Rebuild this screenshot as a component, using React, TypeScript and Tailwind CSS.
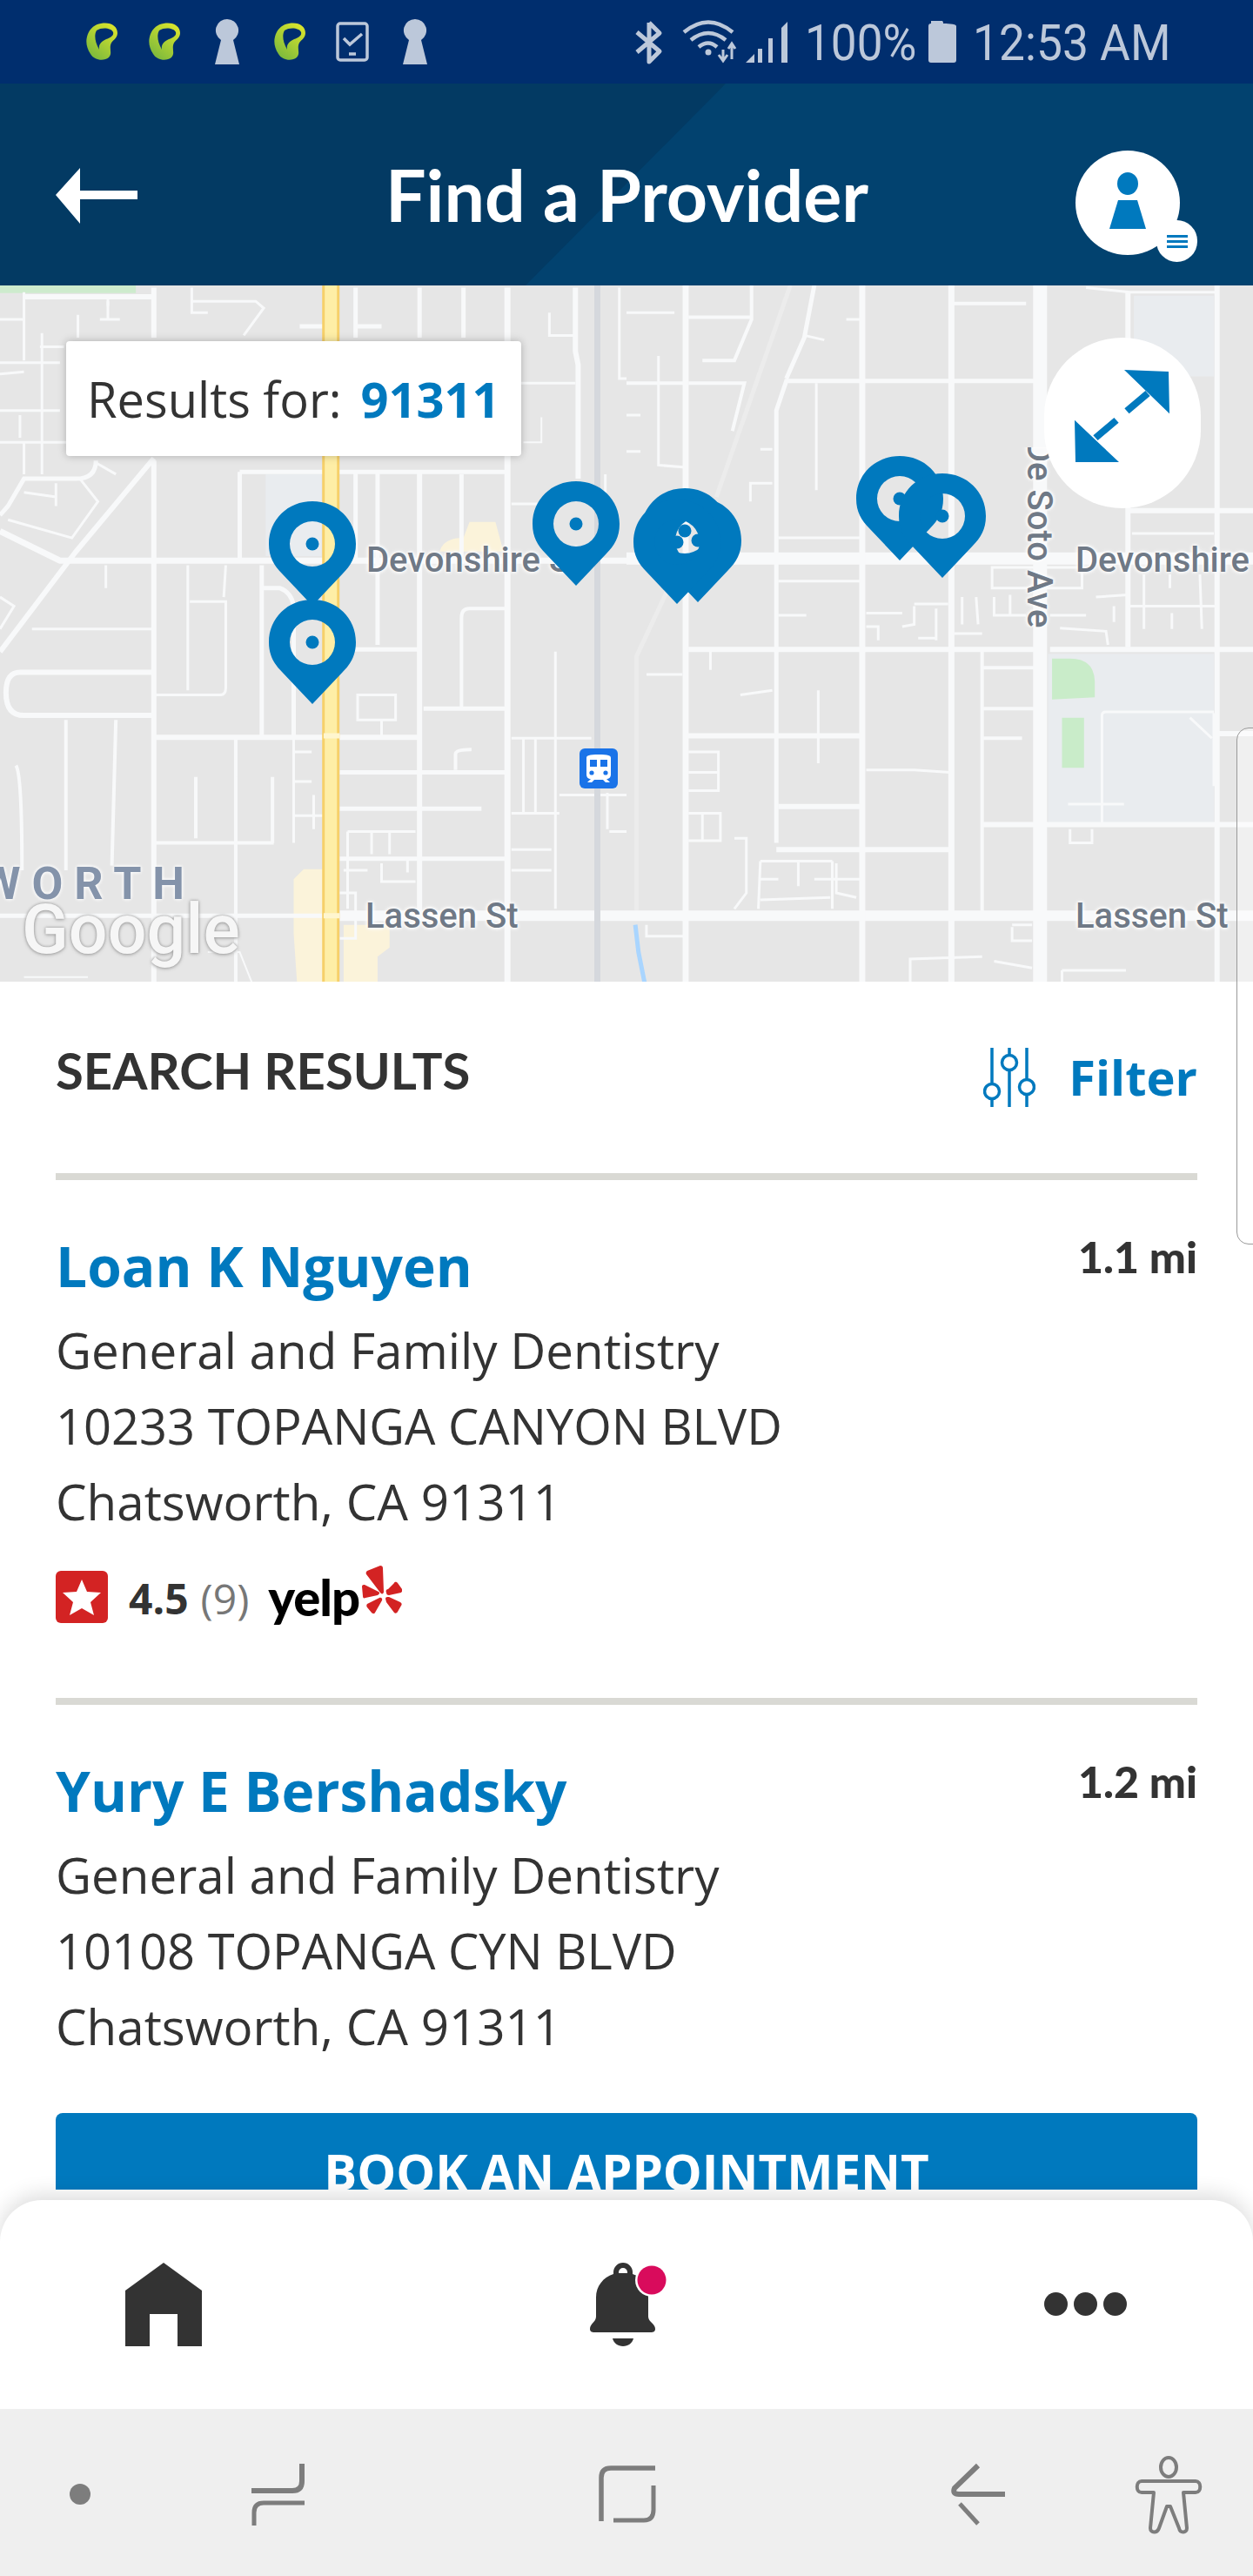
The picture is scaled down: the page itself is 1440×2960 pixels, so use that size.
import type { ReactNode } from "react";

const OPEN_SANS = "font-['Open_Sans',sans-serif]";
const LATO = "font-['Lato',sans-serif]";
const ROBOTO = "font-['Roboto',sans-serif]";
const MAP_LABEL =
  "absolute whitespace-nowrap font-['Roboto',sans-serif] text-[40px] leading-none font-medium text-[#6f7986] [text-shadow:0_0_4px_#fff,0_0_4px_#fff,0_0_6px_#fff]";

type Road = readonly [d: string, width: number];

// coordinates are read off a 2.178 x 1.912 blow-up of each half of the map
const LEFT_ROADS: readonly Road[] = [
  ["M0 555L150 620L1568 620", 7],
  ["M600 425H1270M600 425V615M890 425V620M945 425V805M1155 430V620", 5],
  ["M0 820L190 600L385 395", 6],
  ["M20 500L60 440H190Q240 440 240 400M60 440L20 500L0 520", 5],
  ["M60 30V180M0 185H150M0 90H60M0 360H190M60 360V430M105 120V430M195 80V130M250 90H300M270 50V90", 3],
  ["M60 40H385M385 20V130M385 400V1568", 6],
  ["M0 290H150M0 210L60 205M100 150H160M50 300V350", 3],
  ["M200 440L245 490L180 570L20 530M60 470L140 480M140 450V500M240 405L290 430", 3],
  ["M0 700L35 720L0 770M265 630V680M80 770H385", 3],
  ["M385 865H50Q15 865 15 910Q15 960 60 960H385", 6],
  ["M165 970V1300M290 970L280 1290M40 1070Q55 1090 55 1300", 4],
  ["M470 630V905M475 710H565V900Q565 915 550 915H390M565 630L560 700", 3],
  ["M655 630V1005M660 680H700Q730 690 735 720V1005", 5],
  ["M390 1008H1050", 6],
  ["M590 1010V1568M390 1240H685M490 1095V1230M682 1095V1240", 4],
  ["M1050 425V1400", 6],
  ["M855 815H1050M850 1085H1270M850 1165H1205M850 1275H1270M1060 945H1270", 5],
  ["M1270 20V1568", 7],
  ["M735 1040H780M735 1105H780M735 1180H810M735 1010V1240M785 1135V1210", 3],
  ["M870 1215H1040M870 1215V1385M930 1215V1265M975 1215V1265M860 1300H920M955 1285V1325H1040M1020 1275V1305M850 1350H890V1450H850", 3],
  ["M895 915H990V970H895ZM955 970V1005", 3],
  ["M1265 725H1175Q1155 725 1155 745V945M1140 1080V1045Q1140 1035 1180 1035", 4],
  ["M1355 305V360H1310", 2],
  ["M890 20V130M895 105H955M1050 20V130M1160 20V130M750 105H810", 5],
  ["M480 50H640L660 65L610 125M480 20V75H520M270 40V60", 3],
  ["M1440 20V160L1447 190V440", 6],
  ["M1375 75V125H1440M1270 230H1440M1550 20V220H1568M1515 430V490", 3],
  ["M1280 495H1400M1390 820V1385M1310 1010V1175M1340 1010V1175M1280 1010H1400M1280 1175H1400M1280 1255H1380M1280 1300H1380", 3],
  ["M1400 1135H1568M1520 1130V1210M1525 1215H1568M1400 1010H1480", 3],
  ["M0 1400H810", 5],
  ["M850 1400H1568", 12],
  ["M520 1480H600L640 1568M60 1535H220", 2],
];

const RIGHT_ROADS: readonly Road[] = [
  ["M0 615H1568", 14],
  ["M0 1400H1568", 12],
  ["M148 15V1568", 7],
  ["M375 1240V290L400 225H1035M470 15L445 130L400 220", 5],
  ["M0 230H148M155 85H313M313 15V90L270 180H190M155 230H295L265 335", 4],
  ["M80 170V410L148 415M0 75H120M0 300H35M0 380H35M335 375H365M310 490V450H365", 3],
  ["M590 15V1568M813 15V1568", 7],
  ["M1035 15V1568", 16],
  ["M1255 30V810M1478 15V1568", 6],
  ["M155 815H1025M150 1005H590M380 1160H590M375 1255H810M1060 815H1568M890 1200H1568M1260 510H1568M1480 1000H1568", 6],
  ["M475 230V465M445 125L495 135M380 570H590M380 665H590M380 740H450M550 90H585", 3],
  ["M890 820V1390M890 855H1030M890 945H1030M890 1010H990M815 55H1000", 4],
  ["M600 1080H660H720L810 1085", 3],
  ["M1190 1200V960Q1190 952 1200 952H1470M1105 1155H1245M1470 955V1115M1410 965L1465 1010", 3],
  ["M155 1040H230V1125H155M155 1085H230M155 1175H235V1235H155M190 1175V1235", 3],
  ["M335 1280H515M335 1280L330 1385M335 1320H380M430 1280V1335M335 1365L510 1360M515 1280V1385M270 1230H300V1350L270 1385M525 1285V1350L575 1360M470 1320H585", 3],
  ["M600 735H690M720 720V760L690 765M775 725V795M730 790H775M720 715H805M600 765H630V795", 3],
  ["M50 870H140M210 820V860M285 915L365 905M480 905V1065", 3],
  ["M915 635H1140V680H915ZM840 700V760M875 700L880 760M820 780H890M920 700V740H1000M960 695V740M1085 768L1200 775L1205 805M1175 700L1255 695M1060 740H1150M1220 720V755", 3],
  ["M1110 1210V1240H1165V1210M965 1420H1015M965 1425V1455H1015M710 1568V1495L890 1490M920 1500L1015 1515M1090 1520H1250M1090 1568V1520", 3],
  ["M1150 20L1260 30H1478M1265 560H1470M1295 650V770M1435 650L1440 770M1360 650V680M1365 735V770M1260 720H1478", 3],
  ["M50 1420V1445H148", 3],
];

function StreetMap() {
  return (
    <svg viewBox="0 0 1440 800" className="absolute inset-0 h-[800px] w-[1440px]">
      <rect width="1440" height="800" fill="#e6e6e6" />
      <g transform="translate(0 -8) scale(0.4592 0.523)">
        <path d="M0 15H340V32H0Z" fill="#cdebcd" />
        <path d="M665 430H805V610H665Z" fill="#e9ecef" />
        <path d="M1100 600Q1110 570 1160 570L1175 535H1240L1260 600Z" fill="#fbf3da" />
        <path d="M735 1320L760 1298H810V1568H745L735 1440ZM860 1420H975V1470L945 1490V1568H860Z" fill="#fbf3da" />
        {LEFT_ROADS.map(([d, width]) => (
          <path key={d} d={d} fill="none" stroke="#f8f9fa" strokeWidth={width} vectorEffect="non-scaling-stroke" />
        ))}
        <path d="M1495 15V1568" stroke="#d5d8dd" strokeWidth="7" vectorEffect="non-scaling-stroke" />
        <path d="M828 15V1568" stroke="#f6d06a" strokeWidth="20" vectorEffect="non-scaling-stroke" />
        <path d="M828 15V1568" stroke="#feeea6" strokeWidth="14" vectorEffect="non-scaling-stroke" />
        <path d="M810 1005H850M810 1400H850" stroke="#fff6cf" strokeWidth="6" vectorEffect="non-scaling-stroke" />
      </g>
      <g transform="translate(720 -8) scale(0.4592 0.523)">
        <path d="M1055 825H1470V1195H1055ZM1270 38H1470V215H1270Z" fill="#e9ecef" />
        <path d="M1065 835H1110Q1170 835 1172 885V920L1065 925ZM1090 965H1145V1075H1090Z" fill="#c9ecc9" />
        <path d="M410 15L225 480M100 690L25 830V1400" fill="none" stroke="#ececec" strokeWidth="5" vectorEffect="non-scaling-stroke" />
        {RIGHT_ROADS.map(([d, width]) => (
          <path key={d} d={d} fill="none" stroke="#f8f9fa" strokeWidth={width} vectorEffect="non-scaling-stroke" />
        ))}
        <path d="M22 1420L30 1480L50 1568" fill="none" stroke="#a9d5ff" strokeWidth="5" vectorEffect="non-scaling-stroke" />
      </g>
    </svg>
  );
}

function MapPin({ left, top }: { left: string; top: string }) {
  return (
    <svg viewBox="0 0 100 120" className={`absolute h-[120px] w-[100px] ${left} ${top}`}>
      <path
        fill="#0079be"
        fillRule="evenodd"
        d="M50 0C78 0 100 21 100 49C100 64 94 74 85 83L50 120L15 83C6 74 0 64 0 49C0 21 22 0 50 0ZM50 23A26 26 0 1 0 50 75A26 26 0 0 0 50 23Z"
      />
      <circle cx="50" cy="49" r="7.5" fill="#0079be" />
    </svg>
  );
}

function TransitBadge() {
  return (
    <svg viewBox="0 0 44 46" className="absolute left-[666px] top-[532px] h-[46px] w-[44px]">
      <rect width="44" height="46" rx="6" fill="#1a73e8" />
      <path fill="#fff" d="M8 11C8 8 11 7 22 7C33 7 36 8 36 11V30C36 33 34 35 31 35L35 39H30L27 36H17L14 39H9L13 35C10 35 8 33 8 30Z" />
      <path fill="#1a73e8" d="M12 13H20V21H12ZM24 13H32V21H24Z" />
      <circle cx="14" cy="28" r="2.6" fill="#1a73e8" />
      <circle cx="30" cy="28" r="2.6" fill="#1a73e8" />
    </svg>
  );
}

function LeafIcon() {
  return (
    <svg viewBox="0 0 36 44" className="h-[44px] w-[36px]">
      <defs>
        <linearGradient id="leaf-fill" x1="0.2" y1="0.9" x2="0.8" y2="0">
          <stop offset="0" stopColor="#7fbb3c" />
          <stop offset="1" stopColor="#dbe52c" />
        </linearGradient>
      </defs>
      <path
        fill="url(#leaf-fill)"
        fillRule="evenodd"
        d="M17 1C28 -1 36 4 36 12C36 19 29 20 28 26C27 31 30 36 26 40C20 45 9 43 5 36C0 28 -1 21 2 13C5 6 10 2 17 1ZM12 9C9 14 10 22 15 31C14 25 17 22 23 19C28 17 32 15 31 11C29 6 18 5 12 9Z"
      />
    </svg>
  );
}

function KeyholeIcon() {
  return (
    <svg viewBox="0 0 28 52" className="h-[52px] w-[28px]">
      <path fill="#bcc8da" d="M14 0A13 13 0 0 1 21 24L28 52H0L7 24A13 13 0 0 1 14 0Z" />
    </svg>
  );
}

function StatusIcons() {
  return (
    <div className="flex items-center">
      <div className="ml-[99px]"><LeafIcon /></div>
      <div className="ml-[36px]"><LeafIcon /></div>
      <div className="ml-[40px]"><KeyholeIcon /></div>
      <div className="ml-[40px]"><LeafIcon /></div>
      <svg viewBox="0 0 38 46" className="ml-[35px] h-[46px] w-[38px]" fill="none" stroke="#bcc8da">
        <rect x="2" y="2" width="34" height="42" rx="3" strokeWidth="3.5" />
        <path d="M9 19L16 26L30 14" strokeWidth="3.5" />
        <path d="M15 37H23" strokeWidth="3.5" />
      </svg>
      <div className="ml-[39px]"><KeyholeIcon /></div>
    </div>
  );
}

function StatusRight() {
  return (
    <div className="absolute left-0 top-0 flex h-24 w-full text-[#bcc8da]">
      <svg viewBox="0 0 620 96" className="absolute left-[720px] top-0 h-24 w-[620px]" fill="none" stroke="#bcc8da">
        {/* bluetooth */}
        <path d="M26 26V71L38 59L12 37M26 26L38 38L12 60" strokeWidth="5" strokeLinejoin="round" />
        {/* wifi */}
        <path d="M66 37Q94 14 122 37M74 46Q94 30 114 46M83 54Q94 45 104 54" strokeWidth="4.5" />
        <circle cx="94" cy="60" r="3.5" fill="#bcc8da" stroke="none" />
        <path d="M111 57V68M106 63L111 70L116 63M121 68V52M117 56L121 50L125 56" strokeWidth="3" />
        {/* signal */}
        <path d="M137 72L147 62V72ZM151 72V56H156V72ZM163 72V44H168V72ZM178 72V32L185 25V72Z" fill="#bcc8da" stroke="none" />
        {/* battery */}
        <path d="M347 30C347 28 348 27 350 27V24C350 24 351 24 352 24H362C363 24 364 24 364 27C366 27 379 27 379 30V69C379 71 378 72 376 72H350C348 72 347 71 347 69Z" fill="#bcc8da" stroke="none" />
      </svg>
      <span className={`absolute left-[925px] top-[20px] w-[121px] origin-left scale-x-[0.915] whitespace-nowrap text-[58px] leading-[58px] ${ROBOTO}`}>
        100%
      </span>
      <span className={`absolute left-[1118px] top-[20px] origin-left scale-x-[0.92] whitespace-nowrap text-[58px] leading-[58px] ${ROBOTO}`}>
        12:53 AM
      </span>
    </div>
  );
}

function AppHeader() {
  return (
    <header className="relative flex h-[232px] items-center justify-between bg-[#033a63] pl-[64px] pr-[84px]">
      <div className="absolute inset-0 bg-[#02426f] [clip-path:polygon(834px_0,100%_0,100%_100%,604px_100%)]" />
      <svg viewBox="0 0 94 64" className="relative mt-[25px] h-[64px] w-[94px]">
        <path fill="#fff" d="M28 0V26H94V36H28V64L0 31Z" />
      </svg>
      <h1 className={`absolute left-[443px] top-[80px] whitespace-nowrap text-[82.5px] leading-[96px] font-bold text-white ${LATO}`}>
        Find a Provider
      </h1>
      <div className="relative mt-[42px] h-[120px] w-[120px] rounded-full bg-white">
        <svg viewBox="0 0 120 120" className="h-[120px] w-[120px]">
          <ellipse cx="60" cy="38" rx="12" ry="13" fill="#0079be" />
          <path fill="#0079be" d="M49 57H71L81 90H39Z" />
        </svg>
        <div className="absolute left-[93px] top-[80px] flex h-[48px] w-[47px] flex-col items-center justify-center gap-[3px] rounded-full bg-white">
          <span className="h-[3px] w-[24px] bg-[#0079be]" />
          <span className="h-[3px] w-[24px] bg-[#0079be]" />
          <span className="h-[3px] w-[24px] bg-[#0079be]" />
        </div>
      </div>
    </header>
  );
}

function MapPanel() {
  return (
    <section className="relative h-[800px] overflow-hidden">
      <StreetMap />
      <span className={`${MAP_LABEL} left-[421px] top-[296px]`}>Devonshire St</span>
      <span className={`${MAP_LABEL} left-[1236px] top-[296px]`}>Devonshire</span>
      <span className={`${MAP_LABEL} left-[420px] top-[705px]`}>Lassen St</span>
      <span className={`${MAP_LABEL} left-[1236px] top-[705px]`}>Lassen St</span>
      <span className={`${MAP_LABEL} left-[1170px] top-[177px] origin-top-left translate-x-[44px] rotate-90 [clip-path:inset(0_0_0_9px)]`}>De Soto Ave</span>
      <span className={`absolute left-[-22px] top-[662px] text-[52px] leading-none font-bold tracking-[13px] text-[#8493aa] [text-shadow:0_0_4px_#fff,0_0_4px_#fff] ${ROBOTO}`}>
        WORTH
      </span>
      <span className={`absolute left-[25px] top-[701px] text-[79px] leading-none font-medium text-[#f6f6f6] [text-shadow:0_0_3px_#9a9a9a,0_1px_4px_#aaa] ${ROBOTO}`}>
        Google
      </span>
      <TransitBadge />
      <MapPin left="left-[309px]" top="top-[248px]" />
      <MapPin left="left-[309px]" top="top-[361px]" />
      <MapPin left="left-[612px]" top="top-[225px]" />
      <MapPin left="left-[737px]" top="top-[233px]" />
      <MapPin left="left-[752px]" top="top-[244px]" />
      <MapPin left="left-[728px]" top="top-[246px]" />
      <MapPin left="left-[984px]" top="top-[196px]" />
      <MapPin left="left-[1033px]" top="top-[216px]" />
      <div className="absolute left-[76px] top-[64px] flex h-[132px] w-[523px] items-center gap-[22px] rounded-[4px] bg-white pl-[24px] shadow-[0_0_10px_rgba(0,0,0,0.25)]">
        <span className={`text-[56px] leading-none text-[#333] ${OPEN_SANS}`}>Results for:</span>
        <span className={`text-[56px] leading-none font-bold text-[#0079be] ${OPEN_SANS}`}>91311</span>
      </div>
      <button type="button" className="absolute left-[1200px] top-[60px] flex h-[196px] w-[180px] items-center justify-center rounded-full bg-white">
        <svg viewBox="0 0 110 112" className="mb-[14px] h-[108px] w-[110px]" preserveAspectRatio="none" fill="#0079be">
          <path d="M57 0L108 2L109 52ZM0 60L1 110L51 110Z" />
          <path d="M84 28L60 49M24 81L48 60" stroke="#0079be" strokeWidth="8" />
        </svg>
      </button>
    </section>
  );
}

function FilterIcon() {
  return (
    <svg viewBox="0 0 60 68" className="mt-[8px] h-[68px] w-[60px]" fill="none" stroke="#0079be" strokeWidth="3.5">
      <path d="M10 0V40M10 60V68M30 0V7M30 27V68M50 0V35M50 55V68" />
      <circle cx="10" cy="50" r="8.5" />
      <circle cx="30" cy="17" r="8.5" />
      <circle cx="50" cy="45" r="8.5" />
    </svg>
  );
}

function YelpBurst() {
  return (
    <svg viewBox="0 0 46 62" className="-mt-[10px] ml-[3px] h-[62px] w-[46px]" fill="#d32323">
      <path d="M6 6L21 0C23 0 24 1 24 3L25 30C25 33 22 33 21 31L5 10C4 8 5 7 6 6Z" />
      <path d="M1 35L0 24C0 22 2 22 3 22L19 30C21 31 20 33 18 34L4 37C2 38 1 37 1 35Z" />
      <path d="M20 37C22 36 24 38 23 40L15 54C14 56 12 55 11 54L6 48C5 47 5 45 6 44Z" />
      <path d="M27 38C27 36 29 36 31 36L44 42C46 43 46 45 45 46L41 53C40 55 38 55 37 54L28 42Z" />
      <path d="M28 31C27 29 28 27 30 27L37 20C38 18 40 19 41 20L46 27C47 29 46 30 45 31L31 34C29 34 28 33 28 31Z" />
    </svg>
  );
}

function RatingRow() {
  return (
    <div className="mt-[36px] flex h-[60px] items-center">
      <svg viewBox="0 0 60 60" className="h-[60px] w-[60px]">
        <rect width="60" height="60" rx="6" fill="#d32323" />
        <path fill="#fff" d="M30 10L36 24L52 25L40 36L44 51L30 43L16 51L20 36L8 25L24 24Z" />
      </svg>
      <span className={`ml-[24px] mt-[4px] text-[48px] leading-none font-bold text-[#333] ${OPEN_SANS}`}>4.5</span>
      <span className={`ml-[14px] mt-[4px] text-[48px] leading-none text-[#777] ${OPEN_SANS}`}>(9)</span>
      <span className={`ml-[22px] text-[58px] leading-none font-black tracking-[-1px] text-black ${LATO}`}>yelp</span>
      <YelpBurst />
    </div>
  );
}

function ProviderCard({
  address,
  children,
  city,
  distance,
  name,
}: {
  address: string;
  children?: ReactNode;
  city: string;
  distance: string;
  name: string;
}) {
  return (
    <article className="pt-[56px]">
      <div className="flex items-start justify-between">
        <h2 className={`text-[64px] leading-[86px] font-bold text-[#0079be] ${OPEN_SANS}`}>{name}</h2>
        <span className={`text-[50px] leading-[64px] font-black text-[#333] ${LATO}`}>{distance}</span>
      </div>
      <div className={`mt-[10px] text-[56.5px] leading-[87px] text-[#333] ${OPEN_SANS}`}>
        <p>General and Family Dentistry</p>
        <p className="text-[56px]">{address}</p>
        <p>{city}</p>
      </div>
      {children}
    </article>
  );
}

function ResultsList() {
  return (
    <main className="h-[1388px] overflow-hidden bg-white px-[64px]">
      <div className="flex h-[228px] items-start justify-between border-b-[8px] border-[#d9d9d4] pt-[68px]">
        <span className={`text-[58px] leading-[68px] font-bold text-[#333] ${LATO}`}>SEARCH RESULTS</span>
        <button type="button" className="flex items-center gap-[38px]">
          <FilterIcon />
          <span className={`mt-[6px] text-[56px] leading-none font-bold text-[#0079be] ${OPEN_SANS}`}>Filter</span>
        </button>
      </div>
      <div className="h-[603px] border-b-[8px] border-[#d9d9d4]">
        <ProviderCard name="Loan K Nguyen" distance="1.1 mi" address="10233 TOPANGA CANYON BLVD" city="Chatsworth, CA 91311">
          <RatingRow />
        </ProviderCard>
      </div>
      <ProviderCard name="Yury E Bershadsky" distance="1.2 mi" address="10108 TOPANGA CYN BLVD" city="Chatsworth, CA 91311" />
      <button type="button" className={`mt-[56px] flex h-[136px] w-full items-center justify-center rounded-[8px] bg-[#0079be] text-[56.5px] font-bold text-white ${OPEN_SANS}`}>
        BOOK AN APPOINTMENT
      </button>
    </main>
  );
}

function BottomNav() {
  return (
    <nav className="relative z-10 mt-[12px] flex h-[240px] rounded-t-[48px] bg-white shadow-[0_-6px_24px_rgba(0,0,0,0.14)]">
      <svg viewBox="0 0 88 96" className="absolute left-[144px] top-[72px] h-[96px] w-[88px]" fill="#333">
        <path fillRule="evenodd" d="M44 0L88 32V96H60V59H28V96H0V32Z" />
      </svg>
      <svg viewBox="0 0 90 96" className="absolute left-[678px] top-[72px] h-[96px] w-[90px]">
        <path fill="#333" d="M38 0A11 11 0 0 1 49 11V13C61 17 67 27 67 40V62C67 68 75 70 75 76C75 79 73 80 70 80H5C2 80 0 79 0 76C0 70 7 68 7 62V40C7 27 15 17 27 13V11A11 11 0 0 1 38 0ZM38 6A5 5 0 0 0 33 11V12H43V11A5 5 0 0 0 38 6Z" />
        <path fill="#333" d="M26 87H50C49 92 44 96 38 96C32 96 27 92 26 87Z" />
        <circle cx="71" cy="20" r="19" fill="#fff" />
        <circle cx="71" cy="20" r="16.5" fill="#d90b5c" />
      </svg>
      <div className="absolute left-[1200px] top-[106px] flex gap-[7px]">
        <span className="h-[27px] w-[27px] rounded-full bg-[#333]" />
        <span className="h-[27px] w-[27px] rounded-full bg-[#333]" />
        <span className="h-[27px] w-[27px] rounded-full bg-[#333]" />
      </div>
    </nav>
  );
}

function SystemNav() {
  return (
    <div className="relative z-10 h-[192px] bg-[#efefef]">
      <svg viewBox="0 2768 1440 192" className="h-[192px] w-[1440px]" fill="none" stroke="#7d7d7d" strokeWidth="5.5">
        <circle cx="92" cy="2866" r="12" fill="#7d7d7d" stroke="none" />
        <path d="M289 2862H336Q347 2862 347 2851V2831" strokeWidth="6" />
        <path d="M350 2876H303Q292 2876 292 2887V2902" strokeWidth="5" />
        <path d="M753 2836H702Q691 2836 691 2847V2897" strokeWidth="5.5" />
        <path d="M751 2856V2884Q751 2896 740 2896H705" strokeWidth="5" />
        <path d="M1124 2833L1097 2859Q1094 2866 1102 2866H1155" strokeWidth="6" />
        <path d="M1103 2877L1124 2900" strokeWidth="5" />
        <ellipse cx="1343" cy="2835" rx="9" ry="11" strokeWidth="4" />
        <path
          strokeWidth="4"
          strokeLinejoin="round"
          d="M1312 2851H1374C1381 2851 1381 2864 1374 2864H1360L1364 2905C1364 2911 1356 2911 1355 2905L1345 2880H1341L1332 2905C1330 2911 1322 2911 1322 2905L1326 2864H1312C1305 2864 1305 2851 1312 2851Z"
        />
      </svg>
    </div>
  );
}

export default function App() {
  return (
    <div className="relative h-[2960px] w-[1440px] overflow-hidden bg-white">
      <div className="relative flex h-24 items-center bg-[#002e6e]">
        <StatusIcons />
        <StatusRight />
      </div>
      <AppHeader />
      <MapPanel />
      <ResultsList />
      <BottomNav />
      <SystemNav />
      {/* edge panel handle, sits over the map and the list */}
      <div className="absolute left-[1421px] top-[836px] h-[594px] w-[30px] rounded-l-[14px] border border-[#999] bg-white/40" />
    </div>
  );
}
